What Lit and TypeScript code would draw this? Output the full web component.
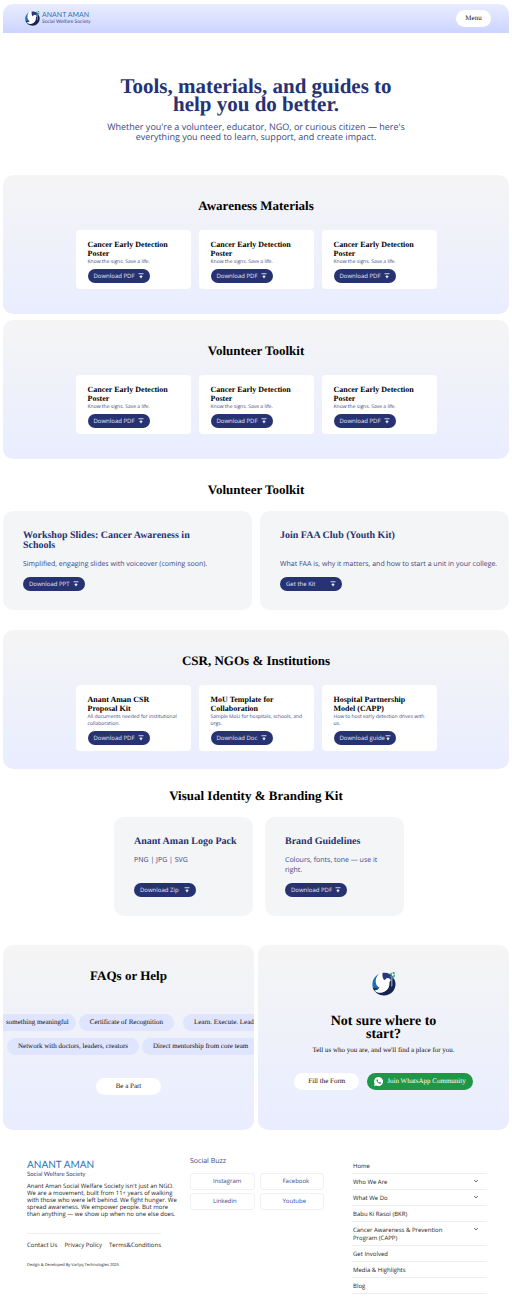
import { LitElement, html, css, svg } from "lit";
import { customElement, property } from "lit/decorators.js";

const birdMark = () => html`<svg viewBox="0 0 48 48" aria-hidden="true">
  ${svg`
    <path d="M16 3C6 7 0 16 1 27c0 4 1 7 3 10l12-5C8 26 8 12 18 2Z" fill="#1d6fb0"/>
    <path d="M2 32c3 9 12 15 22 15 13 0 23-10 23-23 0-5-2-9-4-12L34 18 20 34Z" fill="#14244f"/>
    <path d="M20 2c9-2 18 1 23 9l-7 9-16-6Z" fill="#2c3680"/>
    <path d="M17 1C10 6 6 14 8 23c1 4 4 7 8 8-2 3-6 5-11 6 5 6 16 6 22 1 6-4 8-9 8-16 0-3 1-4 3-6-2-1-3-4-6-4-4 0-6 3-7 6-3-4-5-10-4-16Z" fill="#fff"/>
    <path d="M38 30V10h3v17Z" fill="#6d93a5"/>
    <path d="M34 5l5-4 1 5ZM40 2l5-3v6ZM35 10l5-4v5ZM41 8l5-3-1 6Z" fill="#2aa162"/>
  `}
</svg>`;

const downloadGlyph = () => html`<svg viewBox="0 0 12 12" aria-hidden="true">
  ${svg`<path d="M1 1.5h10M6 4v3" stroke="currentColor" stroke-width="1.8" fill="none"/><path d="M2.5 6h7L6 10.8Z" fill="currentColor"/>`}
</svg>`;

const chevron = () => html`<svg class="chev" viewBox="0 0 8 8" aria-hidden="true">
  ${svg`<path d="M1.5 2.8 4 5.2l2.500-2.400" stroke="#333" stroke-width="1" fill="none"/>`}
</svg>`;

interface Resource {
  title: string;
  text: string;
  action: string;
}

const poster: Resource = {
  title: "Cancer Early Detection Poster",
  text: "Know the signs. Save a life.",
  action: "Download PDF",
};

const csrKits: Resource[] = [
  { title: "Anant Aman CSR Proposal Kit", text: "All documents needed for institutional collaboration.", action: "Download PDF" },
  { title: "MoU Template for Collaboration", text: "Sample MoU for hospitals, schools, and orgs.", action: "Download Doc" },
  { title: "Hospital Partnership Model (CAPP)", text: "How to host early detection drives with us.", action: "Download guide" },
];

const toolkits: Resource[] = [
  { title: "Workshop Slides: Cancer Awareness in Schools", text: "Simplified, engaging slides with voiceover (coming soon).", action: "Download PPT" },
  { title: "Join FAA Club (Youth Kit)", text: "What FAA is, why it matters, and how to start a unit in your college.", action: "Get the Kit" },
];

const brandKits: Resource[] = [
  { title: "Anant Aman Logo Pack", text: "PNG | JPG | SVG", action: "Download Zip" },
  { title: "Brand Guidelines", text: "Colours, fonts, tone — use it right.", action: "Download PDF" },
];

const navItems = [
  { label: "Home" },
  { label: "Who We Are", more: true },
  { label: "What We Do", more: true },
  { label: "Babu Ki Rasoi (BKR)" },
  { label: "Cancer Awareness & Prevention Program (CAPP)", more: true },
  { label: "Get Involved" },
  { label: "Media & Highlights" },
  { label: "Blog" },
];

@customElement("download-button")
class DownloadButton extends LitElement {
  @property() label = "";

  static styles = css`
    :host {
      display: block;
    }
    button {
      display: flex;
      align-items: center;
      justify-content: space-between;
      width: 62px;
      height: 14px;
      padding: 0 6px;
      border: 0;
      border-radius: 7px;
      background: #263272;
      color: #e4e7f7;
      font: 6px/8px "Open Sans", sans-serif;
      text-rendering: geometricPrecision;
      white-space: nowrap;
      cursor: pointer;
    }
    svg {
      flex: none;
      width: 6px;
      height: 6px;
    }
  `;

  render() {
    return html`<button type="button"><span>${this.label}</span>${downloadGlyph()}</button>`;
  }
}

@customElement("resource-band")
class ResourceBand extends LitElement {
  @property() heading = "";
  @property({ attribute: false }) items: Resource[] = [];

  static styles = css`
    :host {
      display: block;
      box-sizing: border-box;
      min-height: 139px;
      padding: 22px 24px 18px;
      border-radius: 10px;
      background: linear-gradient(#f5f5f5, #e9edff);
    }
    h2 {
      margin: 0 0 16px;
      text-align: center;
      font: bold 13px/17px "Liberation Serif", serif;
      color: #000;
    }
    .cards {
      display: grid;
      grid-template-columns: repeat(3, 1fr);
      gap: 8px;
      max-width: 361px;
      margin: 0 auto;
    }
    article {
      padding: 10px 12px 6px;
      border-radius: 4px;
      background: #fff;
    }
    h3 {
      margin: 0 0 1px;
      font: bold 8px/9px "Liberation Serif", serif;
      color: #000;
    }
    p {
      margin: 0 -4px 3px 0;
      font: 5px/7px "Open Sans", sans-serif;
      color: #3b4684;
    }
  `;

  render() {
    return html`<h2>${this.heading}</h2>
      <div class="cards">
        ${this.items.map(
          (r) => html`<article>
            <h3>${r.title}</h3>
            <p>${r.text}</p>
            <download-button .label=${r.action}></download-button>
          </article>`
        )}
      </div>`;
  }
}

@customElement("kit-card")
class KitCard extends LitElement {
  @property({ attribute: false }) item!: Resource;

  static styles = css`
    :host {
      display: flex;
      flex-direction: column;
      box-sizing: border-box;
      min-height: 99px;
      padding: 20px 8px 19px 20px;
      border-radius: 10px;
      background: #f3f5f7;
    }
    h3 {
      min-height: var(--kit-title, 10px);
      margin: 0 0 9px;
      max-width: 190px;
      font: bold 10px/10px "Liberation Serif", serif;
      color: #263272;
    }
    p {
      margin: 0 0 4px;
      font: 7px/10px "Open Sans", sans-serif;
      color: #3b4684;
    }
    download-button {
      margin-top: auto;
    }
  `;

  render() {
    return html`<h3>${this.item.title}</h3>
      <p>${this.item.text}</p>
      <download-button .label=${this.item.action}></download-button>`;
  }
}

@customElement("app-root")
class AppRoot extends LitElement {
  static styles = css`
    :host {
      display: block;
      padding: 4px 3px 12px;
      background: #fff;
      font-family: "Open Sans", sans-serif;
      text-rendering: geometricPrecision;
      color: #222;
    }
    a {
      color: inherit;
      text-decoration: none;
    }
    button {
      border: 0;
      cursor: pointer;
      font: 7px/9px "Liberation Serif", serif;
      text-rendering: geometricPrecision;
      white-space: nowrap;
    }
    header {
      display: flex;
      align-items: center;
      justify-content: space-between;
      height: 29px;
      padding: 0 18px 0 22px;
      border-radius: 10px 10px 0 0;
      background: linear-gradient(#e9ecff, #ccd4ff);
    }
    .brand {
      display: flex;
      align-items: center;
      gap: 2px;
    }
    .brand svg {
      width: 15px;
      height: 15px;
    }
    .name,
    .tag {
      display: block;
      font-family: Lato, sans-serif;
      white-space: nowrap;
    }
    .name {
      font-size: 7px;
      line-height: 7px;
      color: #2b77b4;
    }
    .tag {
      font-size: 5px;
      line-height: 6px;
      color: #3b4684;
    }
    .menu {
      width: 35px;
      height: 17px;
      padding: 0;
      border-radius: 9px;
      background: #fff;
      color: #111;
    }
    .hero {
      padding: 44px 24px 33px;
      text-align: center;
    }
    h1 {
      max-width: 290px;
      margin: 0 auto 9px;
      font: bold 21px/18px "Liberation Serif", serif;
      color: #263272;
    }
    .hero p {
      max-width: 300px;
      margin: 0 auto;
      font-size: 9px;
      line-height: 10px;
      color: #3b4684;
    }
    resource-band {
      margin-bottom: 6px;
    }
    h2 {
      margin: 0;
      text-align: center;
      font: bold 13px/17px "Liberation Serif", serif;
      color: #000;
    }
    .kits {
      padding: 16px 0 14px;
    }
    .kits h2 {
      margin-bottom: 13px;
    }
    .pair {
      display: grid;
      grid-template-columns: 1fr 1fr;
      gap: 8px;
    }
    .tools {
      --kit-title: 20px;
    }
    .csr {
      margin-top: 6px;
    }
    .brands {
      padding: 12px 0 29px;
    }
    .narrow {
      gap: 12px;
      max-width: 290px;
      margin: 0 auto;
      padding-left: 6px;
    }
    .help {
      display: grid;
      grid-template-columns: 1fr 1fr;
      gap: 4px;
    }
    .panel {
      min-width: 0;
      overflow: hidden;
      border-radius: 10px;
      background: linear-gradient(#f5f5f5, #e9edff);
      text-align: center;
    }
    .faq {
      padding: 22px 0 35px;
    }
    .faq h2 {
      margin-bottom: 30px;
    }
    .row {
      display: flex;
      gap: 3px;
      margin-bottom: 7px;
    }
    .second {
      padding-left: 4px;
    }
    .pill {
      flex: none;
      padding: 0 11px;
      border-radius: 9px;
      background: #dfe4ff;
      font: 7px/17px "Liberation Serif", serif;
      color: #111;
    }
    .cut {
      padding: 0 7px 0 3px;
      border-radius: 0 9px 9px 0;
    }
    .far {
      margin-left: 6px;
    }
    .part,
    .form {
      width: 65px;
      height: 17px;
      padding: 0;
      border-radius: 9px;
      background: #fff;
      color: #111;
    }
    .part {
      margin-top: 16px;
    }
    .cta {
      padding: 27px 24px 40px;
    }
    .cta > svg {
      display: block;
      width: 24px;
      height: 24px;
      margin: 0 auto 19px;
    }
    .cta h2 {
      max-width: 120px;
      margin: 0 auto 5px;
      font-size: 14px;
      line-height: 13px;
    }
    .cta p {
      margin: 0 0 18px;
      font: 7px/9px "Liberation Serif", serif;
      color: #111;
    }
    .actions {
      display: flex;
      justify-content: center;
      gap: 8px;
    }
    .wa {
      display: flex;
      align-items: center;
      gap: 4px;
      height: 17px;
      padding: 0 7px;
      border-radius: 9px;
      background: #1f9747;
      color: #fff;
    }
    .wa svg {
      width: 9px;
      height: 9px;
    }
    footer {
      display: grid;
      grid-template-columns: 163px 162px 1fr;
      padding: 27px 22px 0 24px;
    }
    .about .name {
      font-size: 10px;
      line-height: 11px;
    }
    .about .tag {
      font-size: 6px;
      line-height: 7px;
    }
    .about {
      padding: 3px 8px 0 0;
    }
    .about p {
      margin: 5px 0 15px;
      font-size: 6px;
      line-height: 7px;
    }
    .legal {
      display: flex;
      justify-content: space-between;
      width: 134px;
      padding-top: 7px;
      border-top: 1px solid #eee;
      font-size: 6px;
      line-height: 8px;
      white-space: nowrap;
    }
    .credit {
      display: block;
      margin-top: 14px;
      font-size: 4px;
      line-height: 6px;
    }
    h4 {
      margin: 0 0 6px;
      font-weight: 400;
      font-size: 7px;
      line-height: 10px;
      color: #3b4684;
    }
    .social {
      display: grid;
      grid-template-columns: 1fr 1fr;
      gap: 3px 5px;
      max-width: 134px;
    }
    .social a {
      padding-left: 22px;
      border: 1px solid #f1f1f3;
      border-radius: 3px;
      font-size: 6px;
      line-height: 15px;
      color: #3b4684;
    }
    nav {
      padding-top: 1px;
    }
    ul {
      margin: 0;
      padding: 0;
      list-style: none;
    }
    li {
      display: flex;
      justify-content: space-between;
      padding: 4px 8px 3px 1px;
      border-bottom: 1px solid #eee;
      font-size: 6px;
      line-height: 8px;
    }
    li a {
      max-width: 95px;
    }
    .chev {
      width: 6px;
      height: 6px;
    }
  `;

  render() {
    return html`
      <header>
        <a class="brand" href="#">
          ${birdMark()}
          <span><span class="name">ANANT AMAN</span><span class="tag">Social Welfare Society</span></span>
        </a>
        <button class="menu" type="button">Menu</button>
      </header>
      <main>
        <section class="hero">
          <h1>Tools, materials, and guides to help you do better.</h1>
          <p>Whether you're a volunteer, educator, NGO, or curious citizen — here's everything you need to learn, support, and create impact.</p>
        </section>
        <resource-band heading="Awareness Materials" .items=${[poster, poster, poster]}></resource-band>
        <resource-band heading="Volunteer Toolkit" .items=${[poster, poster, poster]}></resource-band>
        <section class="kits">
          <h2>Volunteer Toolkit</h2>
          <div class="pair tools">${toolkits.map((k) => html`<kit-card .item=${k}></kit-card>`)}</div>
        </section>
        <resource-band class="csr" heading="CSR, NGOs & Institutions" .items=${csrKits}></resource-band>
        <section class="kits brands">
          <h2>Visual Identity &amp; Branding Kit</h2>
          <div class="pair narrow">${brandKits.map((k) => html`<kit-card .item=${k}></kit-card>`)}</div>
        </section>
        <div class="help">
          <section class="panel faq">
            <h2>FAQs or Help</h2>
            <div class="row">
              <span class="pill cut">something meaningful</span>
              <span class="pill">Certificate of Recognition</span>
              <span class="pill far">Learn. Execute. Lead.</span>
            </div>
            <div class="row second">
              <span class="pill">Network with doctors, leaders, creators</span>
              <span class="pill">Direct mentorship from core team</span>
            </div>
            <button class="part" type="button">Be a Part</button>
          </section>
          <section class="panel cta">
            ${birdMark()}
            <h2>Not sure where to start?</h2>
            <p>Tell us who you are, and we'll find a place for you.</p>
            <div class="actions">
              <button class="form" type="button">Fill the Form</button>
              <button class="wa" type="button">
                <svg viewBox="0 0 24 24" aria-hidden="true">
                  <path d="M12 0a12 12 0 0 0-10.300 18L0 24l6.200-1.600A12 12 0 1 0 12 0Z" fill="#fff" />
                  <path d="M8.500 6c-.6 0-2 1-2 2.800 0 4 5.500 9.200 9.200 9.200 1.800 0 3-1.300 3-2.600 0-.6-3-2.200-3.500-2.200s-1 1.700-1.700 1.700c-.8 0-3.800-2.700-3.800-3.600 0-.5 1-1.100 1-1.800C10.700 9 9.500 6 8.500 6Z" fill="#1f9747" />
                </svg>
                <span>Join WhatsApp Community</span>
              </button>
            </div>
          </section>
        </div>
      </main>
      <footer>
        <div class="about">
          <span class="name">ANANT AMAN</span>
          <span class="tag">Social Welfare Society</span>
          <p>Anant Aman Social Welfare Society isn't just an NGO. We are a movement, built from 11+ years of walking with those who were left behind. We fight hunger. We spread awareness. We empower people. But more than anything — we show up when no one else does.</p>
          <div class="legal">
            <a href="#">Contact Us</a><a href="#">Privacy Policy</a><a href="#">Terms&amp;Conditions</a>
          </div>
          <small class="credit">Design &amp; Developed By Vartyq Technologies 2025</small>
        </div>
        <div>
          <h4>Social Buzz</h4>
          <div class="social">
            <a href="#">Instagram</a><a href="#">Facebook</a><a href="#">Linkedin</a><a href="#">Youtube</a>
          </div>
        </div>
        <nav>
          <ul>
            ${navItems.map((n) => html`<li><a href="#">${n.label}</a>${n.more ? chevron() : ""}</li>`)}
          </ul>
        </nav>
      </footer>
    `;
  }
}
